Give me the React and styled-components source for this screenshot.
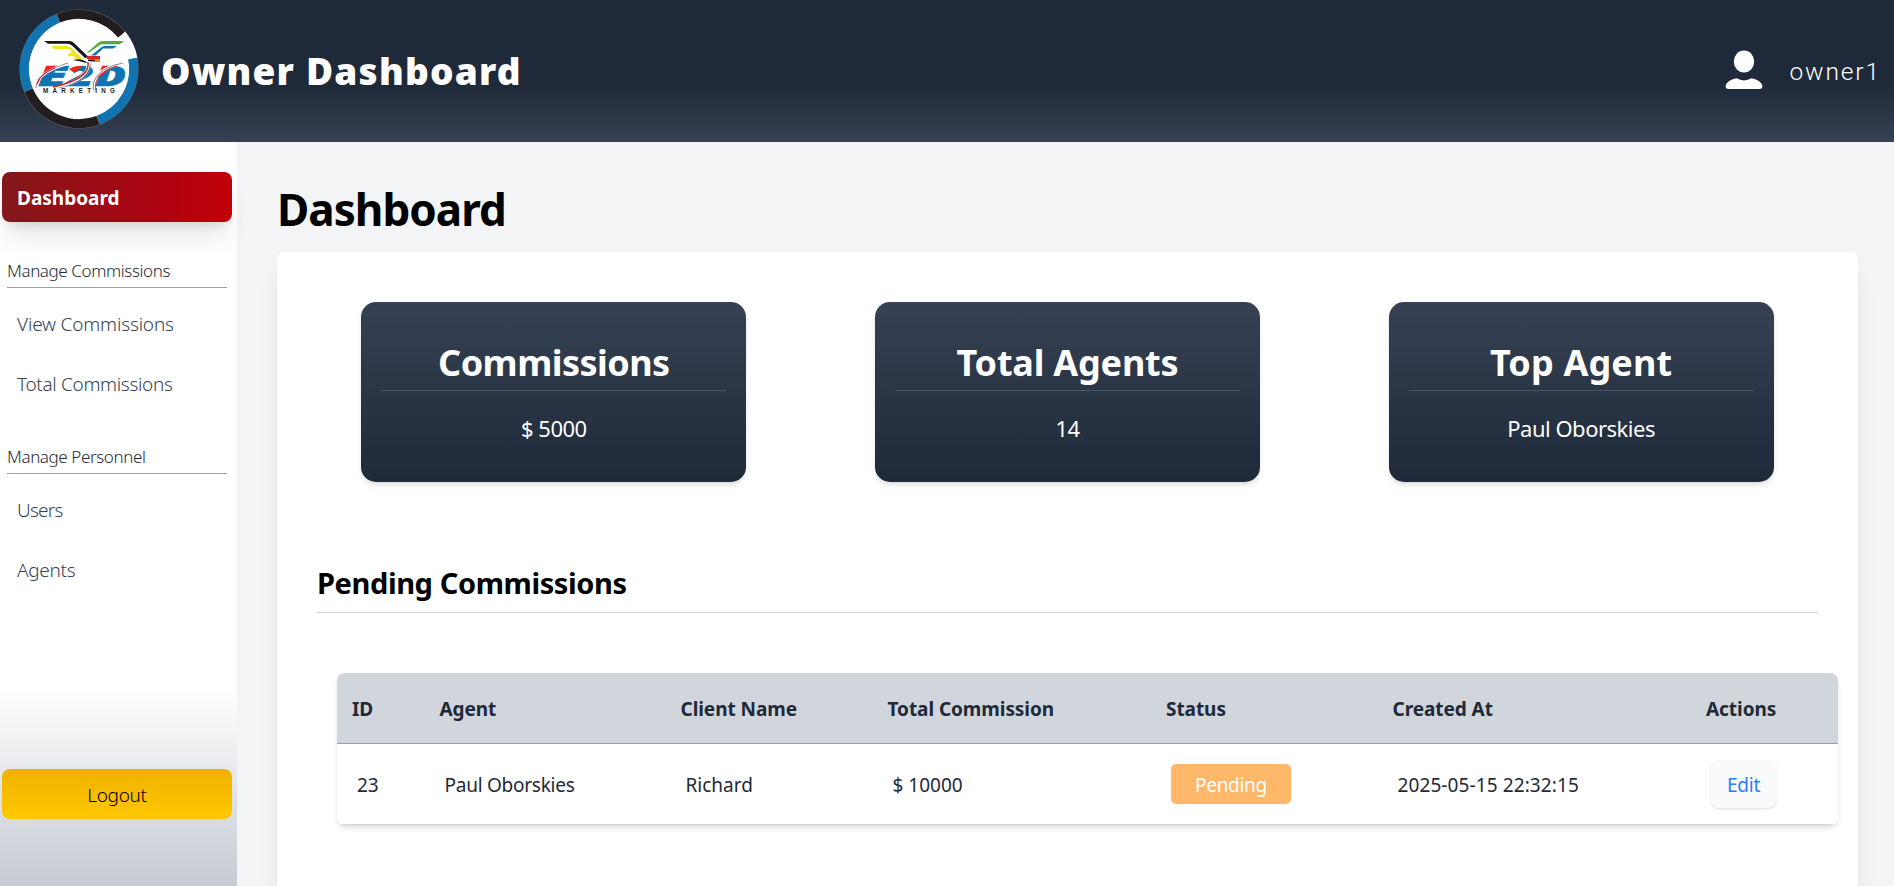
import React from "react";
import styled, { createGlobalStyle } from "styled-components";

const GlobalStyle = createGlobalStyle`
  *, *::before, *::after { box-sizing: border-box; }
  body {
    margin: 0;
    overflow: hidden;
    background: #f3f4f6;
    font-family: "Noto Sans", "Open Sans", sans-serif;
  }
  h1, h2, h3, p { margin: 0; }
`;

const Page = styled.div`
  display: flex;
  flex-direction: column;
  height: 886px;
`;

const Header = styled.header`
  display: flex;
  align-items: center;
  flex: none;
  height: 142px;
  padding: 0 13px 0 19px;
  color: #fff;
  background: linear-gradient(to bottom, #1e2939 0%, #1e2939 60%, #364153 100%);
`;

const LogoSvg = styled.svg`
  width: 120px;
  height: 120px;
  margin-bottom: 4px;
  flex: none;
`;

const Brand = styled.div`
  margin: 0 auto 0 22px;
  font-size: 37px;
  font-weight: 900;
  line-height: 50px;
  letter-spacing: 1.2px;
`;

const Account = styled.div`
  display: flex;
  align-items: center;
  gap: 26px;
`;

const UserIcon = styled.svg`
  width: 38px;
  height: 40px;
  margin-bottom: 3px;
`;

const UserName = styled.span`
  padding-top: 2px;
  font-family: Roboto, sans-serif;
  font-size: 24.5px;
  font-weight: 300;
  line-height: 30px;
  letter-spacing: 1.9px;
`;

const Body = styled.div`
  display: flex;
  flex: 1;
  min-height: 0;
`;

const Sidebar = styled.nav`
  display: flex;
  flex-direction: column;
  flex: none;
  width: 237px;
  padding: 30px 5px 67px 2px;
  background: linear-gradient(to bottom, #fff 0%, #fff 73.5%, #c6cad2 100%);
`;

const NavItem = styled.a`
  flex: none;
  height: 50px;
  padding-left: 15px;
  border-radius: 8px;
  font-size: 19px;
  line-height: ${(p) => (p.$active ? 52 : 50)}px;
  font-weight: ${(p) => (p.$active ? 700 : 275)};
  letter-spacing: ${(p) => p.$tracking || 0}px;
  color: ${(p) => (p.$active ? "#fff" : "#364153")};
  background: ${(p) =>
    p.$active ? "linear-gradient(to right, #82181a 0%, #ae0210 70%, #c10007 100%)" : "none"};
  box-shadow: ${(p) =>
    p.$active ? "0 20px 25px -5px rgba(0,0,0,.1), 0 8px 10px -6px rgba(0,0,0,.1)" : "none"};
`;

const NavGroup = styled.div`
  display: flex;
  flex-direction: column;
  gap: 10px;
  margin-top: ${(p) => p.$top}px;
`;

const NavHeading = styled.div`
  height: 35px;
  margin: 0 5px 1px;
  border-bottom: 1px solid #99a1af;
  font-size: 17px;
  font-weight: 275;
  line-height: 36px;
  letter-spacing: -0.4px;
  color: #1e2939;
`;

const LogoutButton = styled.button`
  height: 50px;
  margin-top: auto;
  border: 0;
  border-radius: 8px;
  font: 300 19px/50px "Noto Sans", sans-serif;
  letter-spacing: -0.3px;
  color: #000;
  background: linear-gradient(to bottom, #f0b100, #ffc800);
`;

const Main = styled.main`
  display: flex;
  flex-direction: column;
  flex: 1;
  padding: 41px 36px 0 40px;
`;

const PageTitle = styled.h1`
  margin-bottom: 16px;
  font-size: 44px;
  font-weight: 700;
  line-height: 53px;
  letter-spacing: -0.95px;
  color: #000;
`;

const Panel = styled.section`
  flex: 1;
  padding: 50px 20px 0;
  border-radius: 8px 8px 0 0;
  background: #fff;
  box-shadow: 0 20px 25px -5px rgba(0, 0, 0, 0.1), 0 8px 10px -6px rgba(0, 0, 0, 0.1);
`;

const Stats = styled.div`
  display: flex;
  justify-content: space-around;
`;

const StatCard = styled.div`
  width: 385px;
  height: 180px;
  padding: 33px 20px 0;
  border-radius: 15px;
  text-align: center;
  color: #fff;
  background: linear-gradient(to bottom, #364153, #1e2939);
  box-shadow: 0 4px 6px -1px rgba(0, 0, 0, 0.1), 0 2px 4px -2px rgba(0, 0, 0, 0.1);
`;

const StatTitle = styled.h2`
  height: 56px;
  border-bottom: 1px solid #4a5565;
  font-size: 36px;
  font-weight: 700;
  line-height: 56px;
  letter-spacing: ${(p) => p.$tracking}px;
`;

const StatValue = styled.p`
  margin-top: 20px;
  font-size: 22px;
  line-height: 35px;
  letter-spacing: -0.5px;
`;

const SectionTitle = styled.h3`
  margin: 81px 20px 60px;
  padding-bottom: 9px;
  border-bottom: 1px solid #d1d5dc;
  font-size: 29px;
  font-weight: 700;
  line-height: 40px;
  letter-spacing: -0.4px;
  color: #000;
`;

const TableFrame = styled.div`
  margin: 0 0 0 40px;
  border-radius: 8px;
  overflow: hidden;
  box-shadow: 0 4px 6px -1px rgba(0, 0, 0, 0.1), 0 2px 4px -2px rgba(0, 0, 0, 0.1);
`;

const Table = styled.table`
  width: 100%;
  table-layout: fixed;
  border-spacing: 0;
  font-size: 19px;
  line-height: 30px;
  color: #1e2939;
`;

const Col = styled.col`
  width: ${(p) => (p.$w ? `${p.$w}px` : "auto")};
`;

const Th = styled.th`
  height: 71px;
  padding: 2px 15px 0;
  border-bottom: 1px solid #99a1af;
  background: #d1d5dc;
  text-align: left;
  font-weight: 700;
  letter-spacing: -0.06px;
`;

const Td = styled.td`
  height: 81px;
  padding: ${(p) => (p.$control ? "0 20px" : "2px 20px 0")};
  border-bottom: 1px solid #d1d5dc;
  background: #fff;
  letter-spacing: ${(p) => p.$tracking || 0}px;
`;

const Badge = styled.span`
  display: block;
  width: 120px;
  height: 40px;
  border-radius: 5px;
  text-align: center;
  line-height: 42px;
  letter-spacing: -0.3px;
  color: #fff;
  background: #ffb86a;
`;

const EditButton = styled.button`
  display: block;
  width: 65px;
  height: 48px;
  padding: 2px 0 0;
  border: 0;
  border-radius: 8px;
  font: 400 19px/46px "Noto Sans", sans-serif;
  letter-spacing: -0.2px;
  color: #2b7fff;
  background: #f9fafb;
  box-shadow: 0 1px 3px rgba(0, 0, 0, 0.1), 0 1px 2px -1px rgba(0, 0, 0, 0.1);
`;

const at = (deg, r) => {
  const a = (deg * Math.PI) / 180;
  return `${(60 + r * Math.cos(a)).toFixed(2)} ${(60 + r * Math.sin(a)).toFixed(2)}`;
};
const arc = (from, to) => `M${at(from, 54.6)}A54.6 54.6 0 0 1 ${at(to, 54.6)}`;

const ring = [
  ["#231c1f", -112, -39],
  ["#1173b0", -11, 69],
  ["#231c1f", 69.8, 157],
  ["#1173b0", 157.8, 247.2],
];

function Logo() {
  return (
    <LogoSvg viewBox="0 0 120 120">
      <defs>
        <linearGradient id="mark" x1="0" y1="0.15" x2="0.5" y2="1">
          <stop offset="0.42" stopColor="#f0202c" />
          <stop offset="0.42" stopColor="#1173b0" />
        </linearGradient>
      </defs>
      <circle cx="60" cy="60" r="59.5" fill="#70757c" />
      <circle cx="60" cy="60" r="50.5" fill="#fff" />
      <path d={`M60 60L${at(-39, 59.5)}A59.5 59.5 0 0 1 ${at(-11, 59.5)}Z`} fill="#fff" />
      {ring.map(([color, from, to]) => (
        <path key={from} d={arc(from, to)} fill="none" stroke={color} strokeWidth="9" />
      ))}
      <path d="M25 32H50.5Q53 32 55 34L69.5 48 66 49 53 36.5Q51 34.7 48.5 34.7H29Z" fill="#17171a" />
      <path d="M32 37H48Q50.5 37 52 38.5L64 50 57 52 60 50 54 49.5 56 47.5 48 46.5 51 44 53 43 50 40H35Z" fill="#f3e51b" />
      <path d="M105 32H84Q81 32 79 34L67.5 44 70 43.5 82 35.2H101Z" fill="#4db03c" />
      <path d="M98 37H86Q83.5 37 81.5 39L72 46.5H76.5L84 39.5H94Z" fill="#1173b0" />
      <path d="M54 51Q61 49 66 52Q69 53.5 67 54Q61 52 54 51Z" fill="#17171a" />
      <path d="M68 47H81V50H68Z" fill="#d8232a" />
      <path d="M69 50H81V53H71Z" fill="#e98a15" />
      <path d="M69 51.3H76" stroke="#17171a" strokeWidth="1.3" />
      <g fontFamily="Noto Sans, sans-serif" fontStyle="italic" fontWeight="900" fontSize="28.5" fill="url(#mark)" stroke="url(#mark)" strokeWidth="0.6">
        <text x="19" y="77" textLength="29" lengthAdjust="spacingAndGlyphs">E</text>
        <text x="47" y="77" textLength="28" lengthAdjust="spacingAndGlyphs">2</text>
        <text x="76" y="77" textLength="31" lengthAdjust="spacingAndGlyphs">D</text>
      </g>
      <g fill="none">
        <path d="M17 80C16 68 31 60 48 55" stroke="#fff" strokeWidth="2.4" />
        <path d="M17 79C17 67 31 60 49 54" stroke="#8f8f96" strokeWidth="1" />
        <path d="M18 75C21 66 27 62 36 59" stroke="#d8232a" strokeWidth="1.2" />
        <path d="M69 53C71 66 56 74 35 79" stroke="#fff" strokeWidth="3" />
        <path d="M69 53C71 65 57 73 34 78" stroke="#d8232a" strokeWidth="1.5" />
        <path d="M71 54C74 66 60 75 40 79" stroke="#8f8f96" strokeWidth="0.9" />
        <path d="M74 79C72 68 84 58 105 54" stroke="#fff" strokeWidth="2.8" />
        <path d="M75 82C71 69 84 58 104 54" stroke="#8f8f96" strokeWidth="1.1" />
        <path d="M77 81C74 69 86 60 98 57" stroke="#d8232a" strokeWidth="1" />
      </g>
      <text x="24" y="84" fontSize="6.3" fontWeight="700" fontFamily="Liberation Sans, sans-serif" textLength="72" fill="#222">
        MARKETING
      </text>
    </LogoSvg>
  );
}

const columns = [
  ["ID", 87.5],
  ["Agent", 241],
  ["Client Name", 207],
  ["Total Commission", 278.5],
  ["Status", 226.5],
  ["Created At", 313.5],
  ["Actions", 0],
];

const stats = [
  ["Commissions", "$ 5000", -0.54],
  ["Total Agents", "14", -0.2],
  ["Top Agent", "Paul Oborskies", 0.15],
];

export default function App() {
  return (
    <Page>
      <GlobalStyle />
      <Header>
        <Logo />
        <Brand>Owner Dashboard</Brand>
        <Account>
          <UserIcon viewBox="0 0 38 40" fill="#fff">
            <ellipse cx="19" cy="11.5" rx="10.2" ry="11" />
            <path d="M11.5 28.3Q19 32.5 26.5 28.3Q35 30 37.3 35Q38 39 34.5 39H3.5Q0 39 .7 35Q3 30 11.5 28.3Z" />
          </UserIcon>
          <UserName>owner1</UserName>
        </Account>
      </Header>
      <Body>
        <Sidebar>
          <NavItem $active>Dashboard</NavItem>
          <NavGroup $top={31}>
            <NavHeading>Manage Commissions</NavHeading>
            <NavItem $tracking={-0.18}>View Commissions</NavItem>
            <NavItem $tracking={-0.33}>Total Commissions</NavItem>
          </NavGroup>
          <NavGroup $top={30}>
            <NavHeading>Manage Personnel</NavHeading>
            <NavItem $tracking={-0.8}>Users</NavItem>
            <NavItem $tracking={-0.3}>Agents</NavItem>
          </NavGroup>
          <LogoutButton>Logout</LogoutButton>
        </Sidebar>
        <Main>
          <PageTitle>Dashboard</PageTitle>
          <Panel>
            <Stats>
              {stats.map(([title, value, tracking]) => (
                <StatCard key={title}>
                  <StatTitle $tracking={tracking}>{title}</StatTitle>
                  <StatValue>{value}</StatValue>
                </StatCard>
              ))}
            </Stats>
            <SectionTitle>Pending Commissions</SectionTitle>
            <TableFrame>
              <Table>
                <colgroup>
                  {columns.map(([name, w]) => (
                    <Col key={name} $w={w} />
                  ))}
                </colgroup>
                <thead>
                  <tr>
                    {columns.map(([name]) => (
                      <Th key={name}>{name}</Th>
                    ))}
                  </tr>
                </thead>
                <tbody>
                  <tr>
                    <Td>23</Td>
                    <Td $tracking={-0.25}>Paul Oborskies</Td>
                    <Td>Richard</Td>
                    <Td>$ 10000</Td>
                    <Td $control><Badge>Pending</Badge></Td>
                    <Td $tracking={0.1}>2025-05-15 22:32:15</Td>
                    <Td $control><EditButton>Edit</EditButton></Td>
                  </tr>
                </tbody>
              </Table>
            </TableFrame>
          </Panel>
        </Main>
      </Body>
    </Page>
  );
}
